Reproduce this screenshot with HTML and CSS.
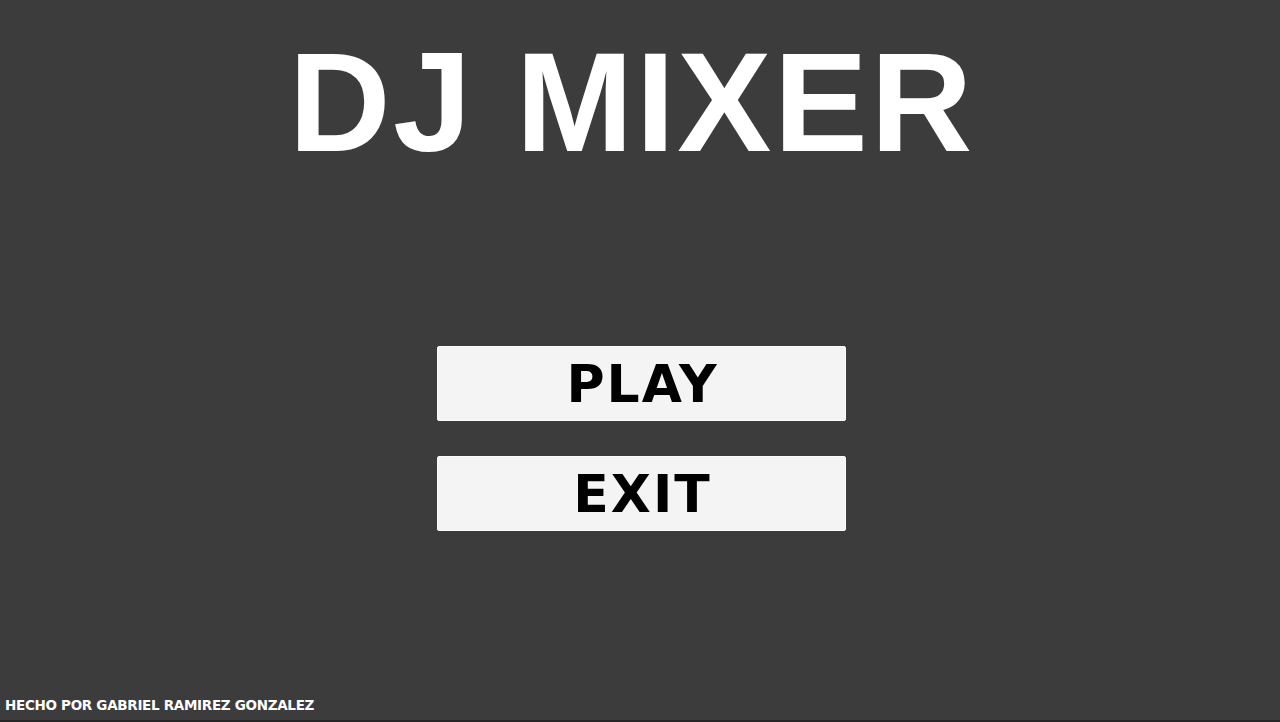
FILE: index.html
```html
<!DOCTYPE html>
<html lang="es">
<head>
<meta charset="utf-8">
<title>DJ Mixer</title>
<link rel="stylesheet" href="styles.css">
</head>
<body>
<div class="screen">
  <h1 class="title">DJ MIXER</h1>
  <div class="menu">
    <button class="menu-btn">PLAY</button>
    <button class="menu-btn">EXIT</button>
  </div>
  <div class="credits">HECHO POR GABRIEL RAMIREZ GONZALEZ</div>
</div>
</body>
</html>
```
FILE: styles.css
```css
html, body {
  margin: 0;
  padding: 0;
  background: #3c3c3c;
}
.screen {
  width: 1280px;
  height: 722px;
  box-sizing: border-box;
  border-bottom: 2px solid #262626;
  display: flex;
  flex-direction: column;
  align-items: center;
  overflow: hidden;
}
.title {
  margin: 32px 19px 0 0;
  font-family: "Liberation Sans", Arial, sans-serif;
  font-weight: 700;
  font-size: 141px;
  line-height: 141px;
  color: #ffffff;
  letter-spacing: 2.5px;
  text-indent: 2.5px;
}
.menu {
  margin-top: 173px;
  margin-left: 3px;
  display: flex;
  flex-direction: column;
  gap: 35px;
}
.menu-btn {
  width: 409px;
  height: 75px;
  box-sizing: border-box;
  background: #f4f4f4;
  border: 1px solid #fbfbfb;
  border-radius: 2px;
  font-family: "DejaVu Sans", sans-serif;
  font-weight: 700;
  font-size: 52px;
  line-height: 1;
  color: #000000;
  padding: 0 0 0 2px;
  letter-spacing: 2px;
  display: flex;
  align-items: center;
  justify-content: center;
}
.credits {
  margin-top: auto;
  margin-bottom: 8px;
  align-self: flex-start;
  margin-left: 5px;
  font-family: "DejaVu Sans", sans-serif;
  font-weight: 700;
  font-size: 13.5px;
  line-height: 1;
  color: #ffffff;
  letter-spacing: -0.3px;
}
```
